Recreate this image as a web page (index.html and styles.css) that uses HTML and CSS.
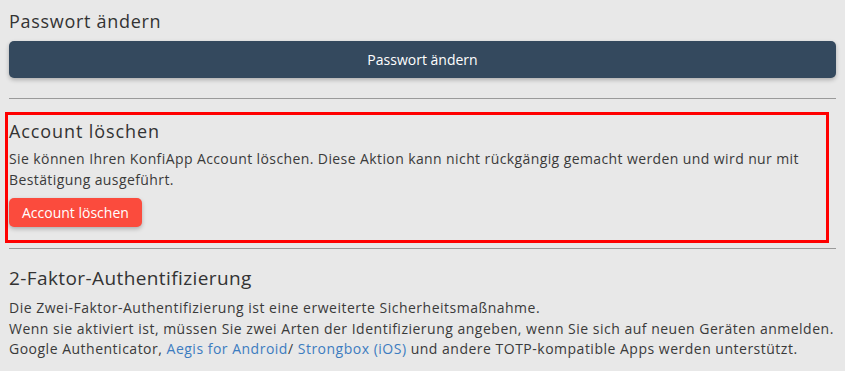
FILE: index.html
```html
<!DOCTYPE html>
<html lang="de">
<head>
<meta charset="utf-8">
<title>Konto</title>
<link rel="stylesheet" href="styles.css">
</head>
<body>
<main class="page">
  <section class="section">
    <h2 class="title">Passwort ändern</h2>
    <button class="btn btn-dark btn-block">Passwort ändern</button>
  </section>
  <hr class="divider divider-top">
  <section class="section danger-box">
    <h2 class="title title-account">Account löschen</h2>
    <p class="text">Sie können Ihren KonfiApp Account löschen. Diese Aktion kann nicht rückgängig gemacht werden und wird nur mit Bestätigung ausgeführt.</p>
    <button class="btn btn-red">Account löschen</button>
  </section>
  <hr class="divider divider-mid">
  <section class="section">
    <h2 class="title title-2fa">2-Faktor-Authentifizierung</h2>
    <p class="text text-tight">Die Zwei-Faktor-Authentifizierung ist eine erweiterte Sicherheitsmaßnahme.<br>Wenn sie aktiviert ist, müssen Sie zwei Arten der Identifizierung angeben, wenn Sie sich auf neuen Geräten anmelden.<br>Google Authenticator, <a class="link" href="#">Aegis for Android</a>/ <a class="link" href="#">Strongbox (iOS)</a> und andere TOTP-kompatible Apps werden unterstützt.</p>
  </section>
</main>
</body>
</html>
```

FILE: styles.css
```css
html, body {
  margin: 0;
  padding: 0;
  background: #e8e8e8;
}
body {
  font-family: "Open Sans", "Liberation Sans", sans-serif;
  color: #3a3a3a;
}
.page {
  padding: 8px 9px 0 9px;
}
.section {
  display: flex;
  flex-direction: column;
  align-items: flex-start;
}
.title {
  margin: 0;
  font-size: 18px;
  font-weight: 400;
  line-height: 26px;
  letter-spacing: 0.7px;
  color: #333;
}
.title-account {
  letter-spacing: 0.9px;
}
.btn {
  border: none;
  font-family: inherit;
  font-size: 14px;
  font-weight: 500;
  color: #fff;
  border-radius: 5px;
  cursor: pointer;
  box-shadow: 0 2px 4px rgba(0,0,0,0.25);
}
.btn-block {
  align-self: stretch;
  height: 37px;
  margin-top: 7px;
}
.btn-dark {
  background: #34495e;
}
.btn-red {
  background: #fb4b3d;
  height: 29px;
  padding: 0 13px;
  margin-top: 8px;
}
.divider {
  border: none;
  border-top: 1px solid #9a9a9a;
  margin: 0;
}
.divider-top {
  margin-top: 20px;
}
.danger-box {
  margin: 13px 7px 0 -4px;
  border: 3px solid #ff0000;
  padding: 3px 1px 13px 1px;
}
.divider-mid {
  margin-top: 5px;
}
.text {
  margin: 4px 0 0 0;
  font-size: 14px;
  line-height: 21px;
  letter-spacing: 0.4px;
}
.text-tight {
  line-height: 20.5px;
  margin-top: 7px;
  letter-spacing: 0.5px;
}
.title-2fa {
  margin-top: 16px;
  font-size: 19px;
  letter-spacing: 0.4px;
}
.link {
  color: #3d7cc0;
  text-decoration: none;
}
```
